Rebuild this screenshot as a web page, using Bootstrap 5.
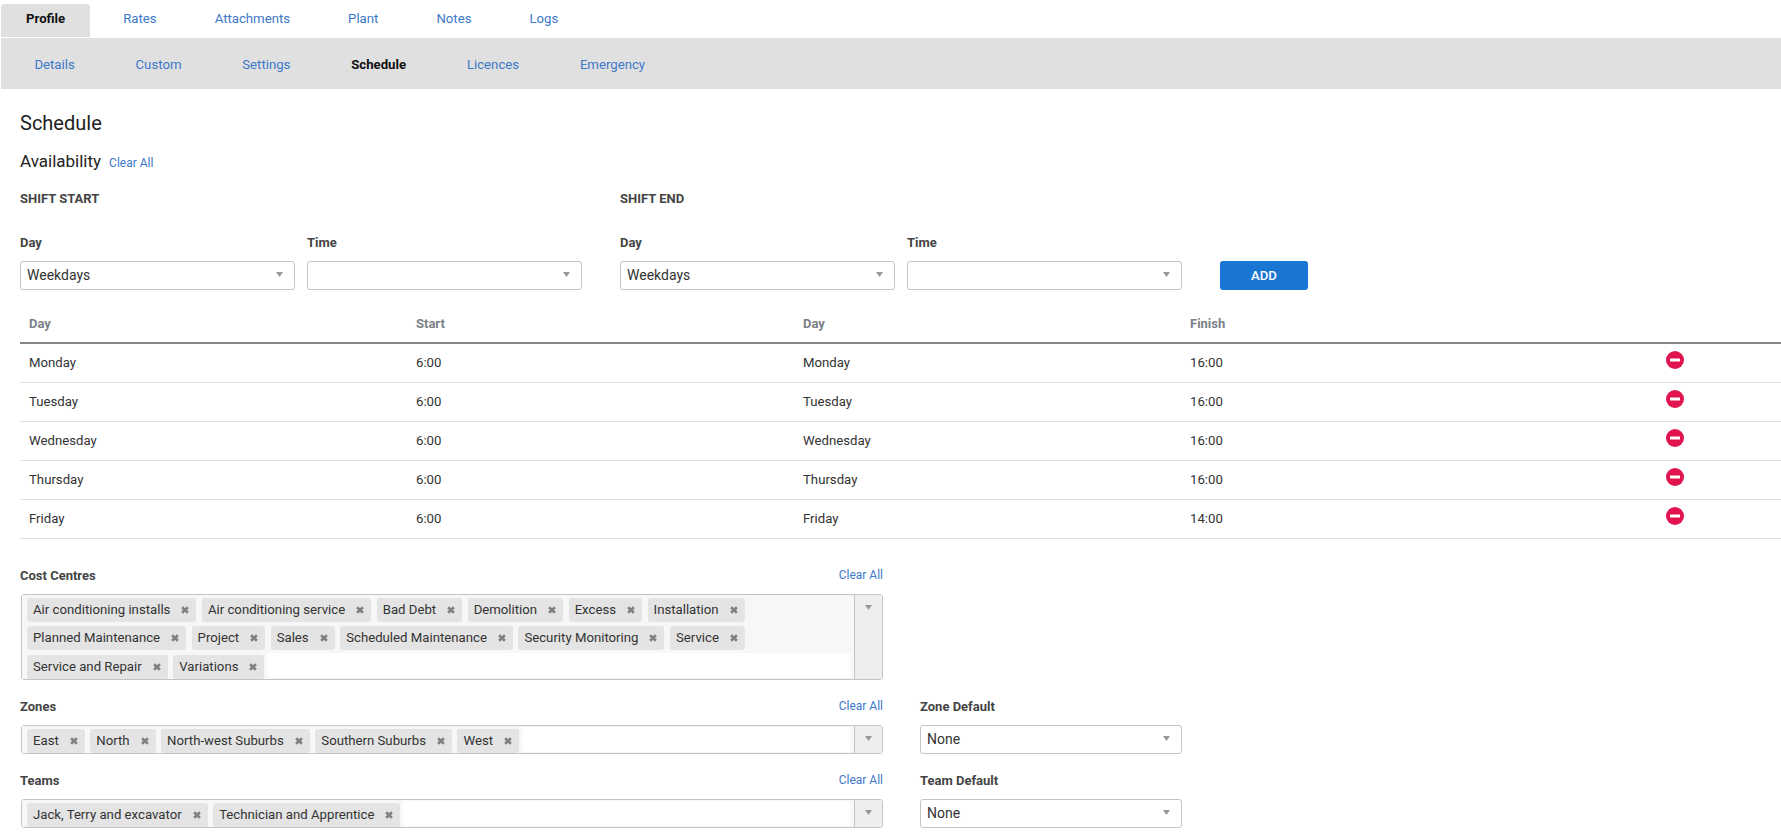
<!DOCTYPE html>
<html lang="en">
<head>
<meta charset="utf-8">
<title>Schedule</title>
<link href="https://cdn.jsdelivr.net/npm/bootstrap@5.3.0/dist/css/bootstrap.min.css" rel="stylesheet">
<style>
html, body { height: 832px; overflow: hidden; }
body { font-family: Roboto, "Liberation Sans", sans-serif; font-size: 13.2px; color: #333; background: #fff; }
a { color: #3c78c8; text-decoration: none; }
.tabs-top { padding: 4px 0 0 1px; height: 38px; gap: 8px; }
.tabs-top a { padding: 0 25px; height: 33px; line-height: 30px; display: block; border-radius: 3px 3px 0 0; }
.tabs-top a.on { background: #e0e0e0; color: #111; font-weight: 700; }
.tabs-sub { background: #e0e0e0; height: 51px; margin-left: 1px; padding-left: 3px; }
.tabs-sub a { padding: 0 30.4px; line-height: 54px; }
.tabs-sub a.on { color: #111; font-weight: 700; }
.pane { padding: 0 0 0 20px; }
.page-h { font-size: 20px; font-weight: 400; color: #222; margin: 21px 0 0; line-height: 26px; }
.sub-h { font-size: 17px; font-weight: 400; color: #222; margin: 0; line-height: 22px; }
.head-row { margin-top: 14px; gap: 8px; align-items: baseline; }
.clear-lnk { font-size: 12px; line-height: 16px; }
.sect-h { font-size: 13px; font-weight: 700; color: #444; line-height: 16px; }
.shift-row { margin-top: 19px; }
.shift-col { width: 600px; }
.fld-lbl { font-size: 13px; font-weight: 700; color: #444; line-height: 16px; margin: 0; display: block; }
.fld-row { margin-top: 28px; align-items: flex-end; }
.fld { width: 275px; margin-right: 12px; }
.fld-gap { margin-left: 26px; }
.sel-box.form-select { height: 29px; padding: 0 24px 0 6px; font-size: 14px; color: #333; border: 1px solid #c4c4c4; border-radius: 3px; margin-top: 10px;
  background-size: 7px 5px; background-position: right 11px top 10px;
  background-image: url("data:image/svg+xml,%3Csvg xmlns='http://www.w3.org/2000/svg' viewBox='0 0 7 5'%3E%3Cpath fill='%23999' d='M0 0h7L3.5 5z'/%3E%3C/svg%3E"); }
.btn-add.btn { width: 88px; height: 29px; margin-left: 26px; padding: 0; font-size: 13.2px; font-weight: 500; background: #1976d2; border: 0; border-radius: 3px; color: #fff; }
.sched { margin: 14px 0 0; table-layout: fixed; width: 1761px; font-size: 13.2px; }
.sched th { font-size: 13px; font-weight: 700; color: #7b8287; height: 39px; padding: 2px 9px 0; vertical-align: middle; border-bottom: 2px solid #84888c; }
.sched td { height: 39px; padding: 1px 9px 0; vertical-align: middle; border-bottom: 1px solid #e0e0e0; color: #333; }
.sched .col-d { width: 387px; }
.sched td.ic { padding: 0 0 5px; text-align: center; line-height: 0; }
.lbl-row { width: 863px; justify-content: space-between; align-items: flex-start; }
.lbl-row .clear-lnk { margin-top: -1px; }
.gap-lbl { margin-top: 10px; }
.multi { width: 862px; margin-left: 1px; border: 1px solid #c4c4c4; border-radius: 3px; background: #fff; display: flex; }
.multi-in { flex: 1; padding: 3px 3px 0 5px; display: flex; flex-wrap: wrap; gap: 4.5px 5.5px; background: #f6f7f9; }
.tagx { height: 24px; background: #e4e4e4; border-radius: 3px; padding: 0 7px 0 6px; line-height: 24px; display: inline-flex; align-items: center; gap: 11px; font-size: 13.2px; color: #333; }
.tagx svg { display: block; }
.filler { flex: 1; background: #fff; border-radius: 4px; min-width: 20px; margin: -2px 0 1px -3px; }
.arrow-pane { width: 28px; background: #eee; border-left: 1px solid #c4c4c4; flex: none; display: block; padding: 10px 0 0 10px; }
.arrow-pane svg { display: block; }
.grp { margin-top: 19px; }
.cc-top { margin-top: 29px; }
.sec-row { align-items: flex-start; }
.side { width: 262px; margin-left: 37px; }
</style>
</head>
<body>
<svg width="0" height="0" class="position-absolute">
  <symbol id="ix" viewBox="0 0 8 8"><path d="M1.1 1.3 6.9 6.7M6.9 1.3 1.1 6.7" stroke="#808080" stroke-width="2.6" fill="none"/></symbol>
  <symbol id="dn" viewBox="0 0 7 5"><path d="M0 0h7L3.5 5z" fill="#999"/></symbol>
  <symbol id="rm" viewBox="0 0 18 18"><circle cx="9" cy="9" r="9" fill="#e0144f"/><rect x="4" y="7.5" width="10" height="3" rx=".6" fill="#fff"/></symbol>
</svg>

<nav class="nav tabs-top">
  <a class="on" href="#">Profile</a><a href="#">Rates</a><a href="#">Attachments</a><a href="#">Plant</a><a href="#">Notes</a><a href="#">Logs</a>
</nav>
<nav class="nav tabs-sub">
  <a href="#">Details</a><a href="#">Custom</a><a href="#">Settings</a><a class="on" href="#">Schedule</a><a href="#">Licences</a><a href="#">Emergency</a>
</nav>

<main class="pane">
  <h1 class="page-h">Schedule</h1>
  <div class="d-flex head-row"><h2 class="sub-h">Availability</h2><a class="clear-lnk" href="#">Clear All</a></div>

  <div class="d-flex shift-row">
    <div class="sect-h shift-col">SHIFT START</div>
    <div class="sect-h">SHIFT END</div>
  </div>

  <div class="d-flex fld-row">
    <div class="fld"><label class="fld-lbl">Day</label><select class="form-select sel-box"><option>Weekdays</option></select></div>
    <div class="fld"><label class="fld-lbl">Time</label><select class="form-select sel-box"><option></option></select></div>
    <div class="fld fld-gap"><label class="fld-lbl">Day</label><select class="form-select sel-box"><option>Weekdays</option></select></div>
    <div class="fld"><label class="fld-lbl">Time</label><select class="form-select sel-box"><option></option></select></div>
    <button type="button" class="btn btn-add">ADD</button>
  </div>

  <table class="table sched">
    <thead><tr><th class="col-d">Day</th><th class="col-d">Start</th><th class="col-d">Day</th><th class="col-d">Finish</th><th></th></tr></thead>
    <tbody>
      <tr><td>Monday</td><td>6:00</td><td>Monday</td><td>16:00</td><td class="ic"><svg width="18" height="18"><use href="#rm"/></svg></td></tr>
      <tr><td>Tuesday</td><td>6:00</td><td>Tuesday</td><td>16:00</td><td class="ic"><svg width="18" height="18"><use href="#rm"/></svg></td></tr>
      <tr><td>Wednesday</td><td>6:00</td><td>Wednesday</td><td>16:00</td><td class="ic"><svg width="18" height="18"><use href="#rm"/></svg></td></tr>
      <tr><td>Thursday</td><td>6:00</td><td>Thursday</td><td>16:00</td><td class="ic"><svg width="18" height="18"><use href="#rm"/></svg></td></tr>
      <tr><td>Friday</td><td>6:00</td><td>Friday</td><td>14:00</td><td class="ic"><svg width="18" height="18"><use href="#rm"/></svg></td></tr>
    </tbody>
  </table>

  <section class="cc-top">
    <div class="d-flex lbl-row"><span class="fld-lbl">Cost Centres</span><a class="clear-lnk" href="#">Clear All</a></div>
    <div class="multi gap-lbl">
      <div class="multi-in">
        <span class="tagx">Air conditioning installs<svg width="8" height="8"><use href="#ix"/></svg></span>
        <span class="tagx">Air conditioning service<svg width="8" height="8"><use href="#ix"/></svg></span>
        <span class="tagx">Bad Debt<svg width="8" height="8"><use href="#ix"/></svg></span>
        <span class="tagx">Demolition<svg width="8" height="8"><use href="#ix"/></svg></span>
        <span class="tagx">Excess<svg width="8" height="8"><use href="#ix"/></svg></span>
        <span class="tagx">Installation<svg width="8" height="8"><use href="#ix"/></svg></span>
        <span class="tagx">Planned Maintenance<svg width="8" height="8"><use href="#ix"/></svg></span>
        <span class="tagx">Project<svg width="8" height="8"><use href="#ix"/></svg></span>
        <span class="tagx">Sales<svg width="8" height="8"><use href="#ix"/></svg></span>
        <span class="tagx">Scheduled Maintenance<svg width="8" height="8"><use href="#ix"/></svg></span>
        <span class="tagx">Security Monitoring<svg width="8" height="8"><use href="#ix"/></svg></span>
        <span class="tagx">Service<svg width="8" height="8"><use href="#ix"/></svg></span>
        <span class="tagx">Service and Repair<svg width="8" height="8"><use href="#ix"/></svg></span>
        <span class="tagx">Variations<svg width="8" height="8"><use href="#ix"/></svg></span>
        <span class="filler"></span>
      </div>
      <div class="arrow-pane"><svg width="7" height="5"><use href="#dn"/></svg></div>
    </div>
  </section>

  <section class="d-flex sec-row grp">
    <div>
      <div class="d-flex lbl-row"><span class="fld-lbl">Zones</span><a class="clear-lnk" href="#">Clear All</a></div>
      <div class="multi gap-lbl">
        <div class="multi-in">
          <span class="tagx">East<svg width="8" height="8"><use href="#ix"/></svg></span>
          <span class="tagx">North<svg width="8" height="8"><use href="#ix"/></svg></span>
          <span class="tagx">North-west Suburbs<svg width="8" height="8"><use href="#ix"/></svg></span>
          <span class="tagx">Southern Suburbs<svg width="8" height="8"><use href="#ix"/></svg></span>
          <span class="tagx">West<svg width="8" height="8"><use href="#ix"/></svg></span>
          <span class="filler"></span>
        </div>
        <div class="arrow-pane"><svg width="7" height="5"><use href="#dn"/></svg></div>
      </div>
    </div>
    <div class="side"><label class="fld-lbl">Zone Default</label><select class="form-select sel-box"><option>None</option></select></div>
  </section>

  <section class="d-flex sec-row grp">
    <div>
      <div class="d-flex lbl-row"><span class="fld-lbl">Teams</span><a class="clear-lnk" href="#">Clear All</a></div>
      <div class="multi gap-lbl">
        <div class="multi-in">
          <span class="tagx">Jack, Terry and excavator<svg width="8" height="8"><use href="#ix"/></svg></span>
          <span class="tagx">Technician and Apprentice<svg width="8" height="8"><use href="#ix"/></svg></span>
          <span class="filler"></span>
        </div>
        <div class="arrow-pane"><svg width="7" height="5"><use href="#dn"/></svg></div>
      </div>
    </div>
    <div class="side"><label class="fld-lbl">Team Default</label><select class="form-select sel-box"><option>None</option></select></div>
  </section>
</main>
<script src="https://cdn.jsdelivr.net/npm/bootstrap@5.3.0/dist/js/bootstrap.bundle.min.js"></script>
</body>
</html>
